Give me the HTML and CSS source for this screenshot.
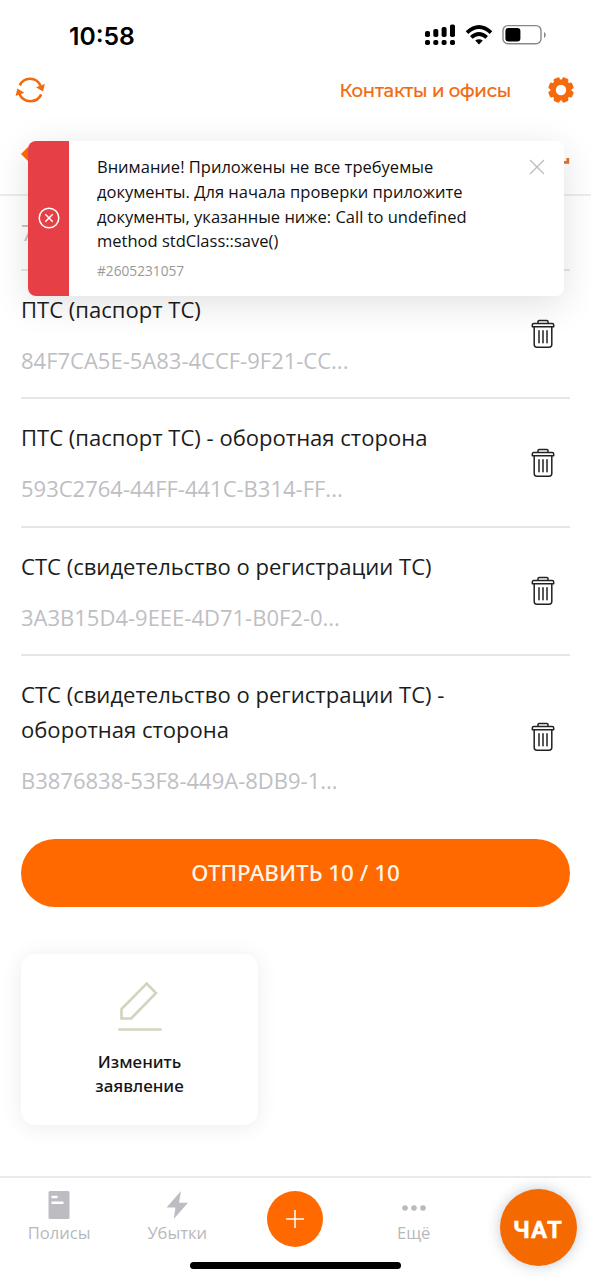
FILE: index.html
```html
<!DOCTYPE html>
<html lang="ru">
<head>
<meta charset="utf-8">
<title>Документы</title>
<link rel="stylesheet" href="styles.css">
</head>
<body>
<svg class="defs" width="0" height="0">
  <symbol id="trash" viewBox="0 0 24 30">
    <g fill="none" stroke="#222" stroke-width="1.5" stroke-linecap="round" stroke-linejoin="round">
      <path d="M7 4V2.6Q7 1.5 8.2 1.5H15.8Q17 1.5 17 2.6V4"/>
      <path d="M2.8 4.4H21.2Q22.7 4.4 22.7 5.9V7.8H1.3V5.9Q1.3 4.4 2.8 4.4Z"/>
      <path d="M3.2 8V25.6Q3.2 28.3 5.9 28.3H18.1Q20.8 28.3 20.8 25.6V8"/>
      <path d="M8 11.8V23.8M12 11.8V23.8M16 11.8V23.8"/>
    </g>
  </symbol>
</svg>
<div class="screen">
  <div class="status">
    <span class="time">10:58</span>
    <svg class="status-icons" width="122" height="24" viewBox="0 0 122 24">
      <g fill="#000">
        <rect x="1" y="8" width="5" height="6" rx="1.8"/><rect x="9.3" y="6" width="5" height="8" rx="1.8"/><rect x="17.6" y="4" width="5" height="10" rx="1.8"/><rect x="26" y="1.5" width="5" height="12.5" rx="1.8"/>
        <rect x="1" y="17" width="5" height="5" rx="1.8"/><rect x="9.3" y="17" width="5" height="5" rx="1.8"/><rect x="17.6" y="17" width="5" height="5" rx="1.8"/><rect x="26" y="17" width="5" height="5" rx="1.8"/>
        <path d="M55 21.5L51.2 17.6Q55 14.8 58.8 17.6Z"/>
        <rect x="81.4" y="5" width="15" height="13.5" rx="3"/>
        <path d="M120 9V15Q121.8 14 121.8 12T120 9Z" fill="#888"/>
      </g>
      <g fill="none" stroke="#000" stroke-width="3.8"><path d="M43 9.6Q55 -1.4 67 9.6"/><path d="M47.3 14.4Q55 7.6 62.7 14.4"/></g>
      <rect x="79" y="2.6" width="38" height="18.2" rx="5" fill="none" stroke="#888" stroke-width="1.4"/>
    </svg>
  </div>
  <div class="topbar">
    <svg width="30" height="28" viewBox="0 0 30 28">
      <g fill="none" stroke="#f26a10" stroke-width="2.6"><path d="M4.8 9.4C8.6 1 21 0 25.6 9.8"/><path d="M26.2 18.4C22.4 27 9 28 4.4 18"/></g>
      <path d="M21 11.2L29.8 8L28 15.4ZM9.4 16.8L.6 20L2.4 12.6Z" fill="#f26a10"/>
    </svg>
    <span class="contacts">Контакты и офисы</span>
    <svg class="gear" width="28" height="28" viewBox="-14 -14 28 28">
      <g fill="#f56a0c">
        <rect x="-3.3" y="-12.8" width="6.6" height="25.6" rx="1.6" transform="rotate(22.5)"/><rect x="-3.3" y="-12.8" width="6.6" height="25.6" rx="1.6" transform="rotate(67.5)"/><rect x="-3.3" y="-12.8" width="6.6" height="25.6" rx="1.6" transform="rotate(112.5)"/><rect x="-3.3" y="-12.8" width="6.6" height="25.6" rx="1.6" transform="rotate(157.5)"/>
        <circle r="10.6"/>
      </g>
      <circle r="5.2" fill="#fff"/>
    </svg>
  </div>
  <div class="subbar">
    <svg width="20" height="20" viewBox="0 0 20 20"><path d="M0 9L9 0V18Z" fill="#fe6a04"/></svg>
    <svg width="20" height="20" viewBox="0 0 20 20"><path d="M1 13V17.4H17.8V13" fill="none" stroke="#e87028" stroke-width="2.8"/></svg>
  </div>
  <main class="list">
    <div class="row row-partial"><p class="file">7</p></div>
    <div class="row"><div><p class="name">ПТС (паспорт ТС)</p><p class="file">84F7CA5E-5A83-4CCF-9F21-CC...</p></div><svg class="trash"><use href="#trash"/></svg></div>
    <div class="row"><div><p class="name">ПТС (паспорт ТС) - оборотная сторона</p><p class="file">593C2764-44FF-441C-B314-FF...</p></div><svg class="trash"><use href="#trash"/></svg></div>
    <div class="row"><div><p class="name">СТС (свидетельство о регистрации ТС)</p><p class="file">3A3B15D4-9EEE-4D71-B0F2-0...</p></div><svg class="trash"><use href="#trash"/></svg></div>
    <div class="row row-last"><div><p class="name">СТС (свидетельство о регистрации ТС) -<br>оборотная сторона</p><p class="file">B3876838-53F8-449A-8DB9-1...</p></div><svg class="trash"><use href="#trash"/></svg></div>
  </main>
  <button class="send">ОТПРАВИТЬ 10 / 10</button>
  <div class="card">
    <svg width="46" height="52" viewBox="0 0 46 52" fill="none" stroke="#d3d3be" stroke-width="2.6">
      <path d="M29.6 2.5L39 12L14.2 37.5H4.5V28Z"/><path d="M2.3 48.5H43.5" stroke-linecap="round"/>
    </svg>
    <p>Изменить<br>заявление</p>
  </div>
  <nav class="tabs">
    <div class="tab">
      <svg width="24" height="30" viewBox="0 0 24 30"><path d="M3 0H21Q22.5 0 22.5 1.5V26.5Q22.5 28 21 28H3Q1.5 28 1.5 26.5V1.5Q1.5 0 3 0Z" fill="#bdbcc2"/><path d="M4.5 6H10.5M4.5 11.8H16.5" stroke="#fff" stroke-width="2.5"/></svg>
      <span>Полисы</span>
    </div>
    <div class="tab">
      <svg width="24" height="30" viewBox="0 0 24 30"><path d="M16 0L1.5 16.5H10.5L8.7 28L23 11.8H14Z" fill="#bdbcc2"/></svg>
      <span>Убытки</span>
    </div>
    <div class="tab"><div class="plus"><svg width="20" height="20" viewBox="0 0 20 20"><path d="M10 1V19M1 10H19" stroke="#fff" stroke-width="1.5"/></svg></div></div>
    <div class="tab">
      <svg width="28" height="30" viewBox="0 0 28 30" fill="#bab9bd"><circle cx="5" cy="17" r="2.8"/><circle cx="14" cy="17" r="2.8"/><circle cx="23" cy="17" r="2.8"/></svg>
      <span>Ещё</span>
    </div>
    <div class="tab"></div>
  </nav>
  <div class="home"></div>
  <div class="chat">ЧАТ</div>
  <div class="toast">
    <div class="toast-side"><svg width="24" height="24" viewBox="0 0 24 24" fill="none" stroke="#fff" stroke-width="1.5"><circle cx="12" cy="12" r="9.8"/><path d="M8.3 8.3L15.7 15.7M15.7 8.3L8.3 15.7"/></svg></div>
    <div class="toast-body">
      <p>Внимание! Приложены не все требуемые<br>документы. Для начала проверки приложите<br>документы, указанные ниже: Call to undefined<br>method stdClass::save()</p>
      <small>#2605231057</small>
    </div>
    <svg class="close" width="16" height="16" viewBox="0 0 16 16"><path d="M1 1L15 15M15 1L1 15" stroke="#bbb" stroke-width="1.3"/></svg>
  </div>
</div>
</body>
</html>
```
FILE: styles.css
```css
* { box-sizing: border-box; margin: 0; padding: 0; }
body { width: 591px; height: 1280px; overflow: hidden; background: #fff; font-family: "Open Sans", "Noto Sans", sans-serif; color: #1c1c1c; }
.defs { position: absolute; }
.screen { position: relative; width: 591px; height: 1280px; display: flex; flex-direction: column; overflow: hidden; }
.status { height: 70px; padding: 0 45px 0 69px; display: flex; align-items: center; justify-content: space-between; color: #000; }
.time { font: 600 24.7px/30px Inter, sans-serif; padding-top: 1px; }
.topbar { height: 40px; padding: 0 16px 0 15px; display: flex; align-items: center; }
.contacts { margin-left: auto; margin-right: 36px; padding-top: 1px; font: 500 18px/28px Montserrat, Inter, sans-serif; letter-spacing: -.22px; -webkit-text-stroke: .2px; color: #f26a10; }
.subbar { height: 86px; padding: 35px 21px 0; display: flex; justify-content: space-between; border-bottom: 2px solid #ececec; }
.list { padding: 0 21px; }
.row { min-height: 128.5px; padding: 21px 15.5px 20px 0; display: flex; justify-content: space-between; align-items: center; border-bottom: 2px solid #e6e6e6; }
.row-partial { min-height: 74.5px; height: 74.5px; padding-bottom: 19px; align-items: flex-end; }
.row-last { border: 0; }
.name { font-size: 22.05px; line-height: 34.5px; white-space: nowrap; }
.file { margin-top: 16.5px; font-size: 22px; line-height: 34.5px; color: #bebec3; white-space: nowrap; }
.trash { width: 24px; height: 30px; flex: none; }
.send { height: 68px; margin: 21.5px 21px 0; border: 0; border-radius: 34px; background: #ff6900; color: #fff5e8; font: 500 22.4px/30px "Noto Sans", sans-serif; }
.card { width: 237px; height: 171px; margin: 47.5px 0 0 21px; padding-top: 27px; border-radius: 14px; background: #fff; box-shadow: 0 2px 22px rgba(0,0,0,.08); display: flex; flex-direction: column; align-items: center; text-align: center; }
.card p { margin-top: 17px; font-family: "Noto Sans", sans-serif; font-size: 17px; line-height: 24px; font-weight: 500; color: #151515; }
.tabs { position: absolute; left: 0; right: 0; bottom: 0; height: 104px; padding-top: 13px; border-top: 2px solid #ebebeb; background: #fff; display: grid; grid-template-columns: repeat(5, 118.2px); }
.tab { display: flex; flex-direction: column; align-items: center; font-size: 16.6px; line-height: 23px; color: #b8b8bc; }
.plus { width: 56px; height: 56px; border-radius: 50%; background: #ff6900; display: grid; place-items: center; }
.home { position: absolute; left: 190px; top: 1262px; width: 211px; height: 7px; border-radius: 4px; background: #000; }
.chat { position: absolute; left: 500px; top: 1189px; width: 77px; height: 77px; border-radius: 50%; background: #f56a00; color: #fff; display: grid; place-items: center; font: 700 24px/30px Roboto, sans-serif; letter-spacing: 1.2px; -webkit-text-stroke: .4px; box-shadow: 0 0 14px rgba(70,90,110,.32); padding: 5px 1px 0 0; }
.toast { position: absolute; left: 28px; top: 141px; width: 536px; height: 155px; border-radius: 8px; background: #fff; display: flex; box-shadow: 0 8px 36px rgba(0,0,0,.12); }
.toast-side { width: 41px; background: #e64046; border-radius: 8px 0 0 8px; display: grid; place-items: center; padding-bottom: 1px; }
.toast-body { padding: 14px 0 0 28px; font-size: 16.53px; line-height: 24.8px; color: #111; white-space: nowrap; }
.toast-body small { display: block; margin-top: 5px; font-size: 13.7px; line-height: 24px; color: #999; }
.close { position: absolute; right: 19px; top: 18px; }
```
